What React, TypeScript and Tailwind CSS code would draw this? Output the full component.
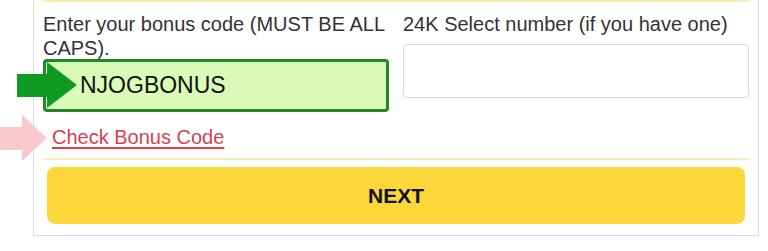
import React from 'react'

function GreenArrow() {
  return (
    <svg className="absolute left-[17px] top-[62px]" width="60" height="46" viewBox="0 0 60 46">
      <polygon points="0,12 30,12 30,0 60,23 30,46 30,35 0,35" fill="#0f9a24" />
    </svg>
  )
}

function PinkArrow() {
  return (
    <svg className="absolute left-0 top-[115px]" width="47" height="46" viewBox="0 0 47 46">
      <polygon points="0,12 22,12 22,0 47,23 22,46 22,35 0,35" fill="#f9c9cd" />
    </svg>
  )
}

export default function App() {
  return (
    <div className="relative w-[768px] h-[251px] bg-white overflow-hidden font-['Liberation_Sans',Arial,sans-serif]">
      <div className="ml-[33px] w-[726px] border border-t-0 border-[#dcdcdc] px-[9px] pb-[11px]">
        <div className="border-t-2 border-[#f6eeb4]" />

        {/* Code fields */}
        <div className="grid grid-cols-2 gap-[14px] pt-[10px]">
          <div>
            <label className="block text-[20px] leading-[24px] text-[#333]">
              Enter your bonus code (MUST BE ALL CAPS).
            </label>
            <div className="mt-[-1px] h-[53px] border-[3px] border-[#1f8a25] rounded-[4px] bg-[#dbfcb9] flex items-center pl-[34px]">
              <span className="text-[23px] text-[#111]">NJOGBONUS</span>
            </div>
          </div>
          <div>
            <label className="block text-[20px] leading-[24px] text-[#333]">
              24K Select number (if you have one)
            </label>
            <div className="mt-2 h-[54px] border border-[#d9d9d9] rounded-[4px] bg-white" />
          </div>
        </div>

        <div className="mt-[13px] pl-[9px]">
          <a href="#" className="text-[20px] leading-[24px] text-[#d6404f] underline decoration-2 underline-offset-[3px]">
            Check Bonus Code
          </a>
        </div>

        <div className="mt-[7px] border-t-2 border-[#f6eeb4]" />

        <div className="mt-[7px] mx-[4px]">
          <button className="w-full h-[57px] rounded-[8px] bg-[#fdd83a] text-[21px] font-bold text-[#111]">
            NEXT
          </button>
        </div>
      </div>

      <GreenArrow />
      <PinkArrow />
    </div>
  )
}
